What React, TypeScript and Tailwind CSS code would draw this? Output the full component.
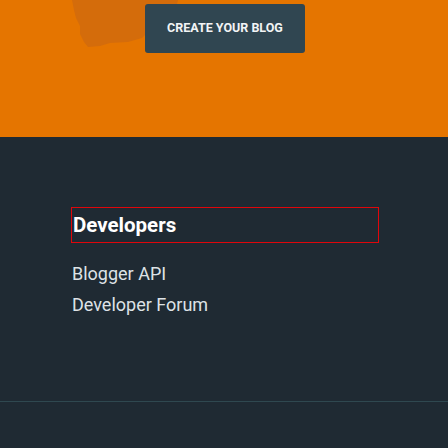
import React from "react";

export default function App() {
  return (
    <div className="w-[448px] h-[448px] overflow-hidden bg-[#1f2a33]" style={{ fontFamily: "Roboto, 'Liberation Sans', sans-serif" }}>
      <div className="relative h-[137px] bg-[#e57500]">
        <svg className="absolute left-0 top-0" width="200" height="60" viewBox="0 0 200 60">
          <path
            d="M72 0 L178 0 L176 8 L168 22 L150 30 L142 38 L128 42 L110 43 L100 46 L88 47 L84 42 L80 34 L80 26 L76 18 L74 10 Z"
            fill="#d46c0b"
          />
        </svg>
        <div className="relative flex justify-center pt-[4px] pl-[2px]">
          <button className="w-[160px] h-[49px] rounded-[3px] bg-[#304651] text-[#f2f4f5] text-[12.5px] font-bold">
            CREATE YOUR BLOG
          </button>
        </div>
      </div>
      <div className="pt-[70px] pl-[71px]">
        <div className="w-[308px] h-[36px] border border-[#e0060b] flex items-center pl-[1px]">
          <h3 className="text-[20.5px] font-bold text-white leading-none">Developers</h3>
        </div>
        <ul className="mt-[20px] flex flex-col gap-[10px] text-[18px] text-[#dde2e6] leading-[21px] pl-[1px]">
          <li>Blogger API</li>
          <li>Developer Forum</li>
        </ul>
      </div>
      <div className="mt-[86px] h-px bg-[#2f4850]" />
    </div>
  );
}
